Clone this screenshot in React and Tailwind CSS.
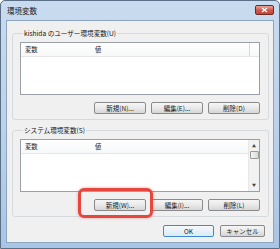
const jp = "font-['Noto_Sans_CJK_JP','Noto_Sans',sans-serif]"

function CloseButton() {
  return (
    <div className="flex h-[10px] w-[19px] items-center justify-center rounded-[2px] border border-[#6e2a24] bg-gradient-to-b from-[#e8a497] via-[#d2584a] to-[#c44536]">
      <svg width="7" height="6" viewBox="0 0 7 6">
        <path d="M1 1 L6 5 M6 1 L1 5" stroke="#fff" strokeWidth="1.4" />
      </svg>
    </div>
  )
}

function Button({ label, width = 'w-[52px]', primary = false }) {
  return (
    <div
      className={`flex h-[12px] ${width} items-center justify-center rounded-[2px] border text-[6.5px] leading-none text-[#1a1a1a] ${
        primary
          ? 'border-[#3c8bd0] bg-gradient-to-b from-[#f4f9fc] to-[#dbeaf4]'
          : 'border-[#8a8a8a] bg-gradient-to-b from-[#f6f6f6] via-[#e9e9e9] to-[#d6d6d6]'
      }`}
    >
      {label}
    </div>
  )
}

function ListBox({ scroll = false }) {
  return (
    <div className="relative flex h-[53px] w-[240px] border border-[#9aa0a8] bg-white">
      <div className="flex flex-1 flex-col">
        <div className="flex h-[14px] items-center border-b border-[#e6e6e6] bg-gradient-to-b from-white to-[#f7f8f9] text-[6.3px] text-[#222]">
          <span className="w-[74px] pl-[4px]">変数</span>
          <span className="flex-1">値</span>
          {!scroll && <span className="mr-[9px] h-full border-r border-[#d8d8d8]" />}
        </div>
        <div className="flex-1" />
      </div>
      {scroll && (
        <div className="flex w-[11px] flex-col items-center border-l border-[#e8e8e8] bg-[#f2f2f2]">
          <span className="mt-[4px] text-[4px] leading-none text-[#444]">▲</span>
          <div className="mt-[3px] h-[8px] w-[9px] rounded-[1px] border border-[#9a9a9a] bg-gradient-to-r from-[#f4f4f4] to-[#dadada]" />
          <div className="flex-1" />
          <span className="mb-[4px] text-[4px] leading-none text-[#444]">▼</span>
        </div>
      )}
    </div>
  )
}

function Group({ label, scroll, buttons }) {
  return (
    <fieldset className="ml-[5px] w-[257px] rounded-[3px] border border-[#d5dadf] pt-[4px] pr-[8px] pb-[5px] pl-[7px]">
      <legend className="ml-[3px] px-[1px] text-[6.6px] leading-[9px] text-[#111]">{label}</legend>
      <ListBox scroll={scroll} />
      <div className="mt-[7px] flex justify-end gap-[5px]">
        {buttons.map((b) => (
          <Button key={b} label={b} />
        ))}
      </div>
    </fieldset>
  )
}

export default function App() {
  return (
    <div className={`h-[249px] w-[280px] bg-white ${jp}`}>
      <div className="flex h-full flex-col rounded-t-[5px] border border-[#5b6f86] bg-gradient-to-b from-[#c9dbef] via-[#bcd2ea] to-[#a9c5e5]">
        <div className="flex h-[19px] items-center justify-between pr-[5px] pl-[6px]">
          <span className="text-[7.5px] text-[#1b1b1b]">環境変数</span>
          <div className="-mt-[2px]">
            <CloseButton />
          </div>
        </div>
        <div className="relative mx-[5px] mb-[5px] flex flex-1 flex-col border border-[#8ea5bf] bg-[#f0f0f0] pt-[8px]">
          <Group label="kishida のユーザー環境変数(U)" buttons={['新規(N)...', '編集(E)...', '削除(D)']} />
          <div className="mt-[6px]">
            <Group label="システム環境変数(S)" scroll buttons={['新規(W)...', '編集(I)...', '削除(L)']} />
          </div>
          <div className="mt-[8px] mr-[8px] flex justify-end gap-[6px]">
            <Button label="OK" width="w-[51px]" primary />
            <Button label="キャンセル" width="w-[45px]" />
          </div>
          <div className="absolute top-[167px] left-[71px] h-[30px] w-[75px] rounded-[6px] border-[3px] border-[#e5463e] shadow-[0_0_3px_rgba(229,70,62,0.5)]" />
        </div>
      </div>
    </div>
  )
}
